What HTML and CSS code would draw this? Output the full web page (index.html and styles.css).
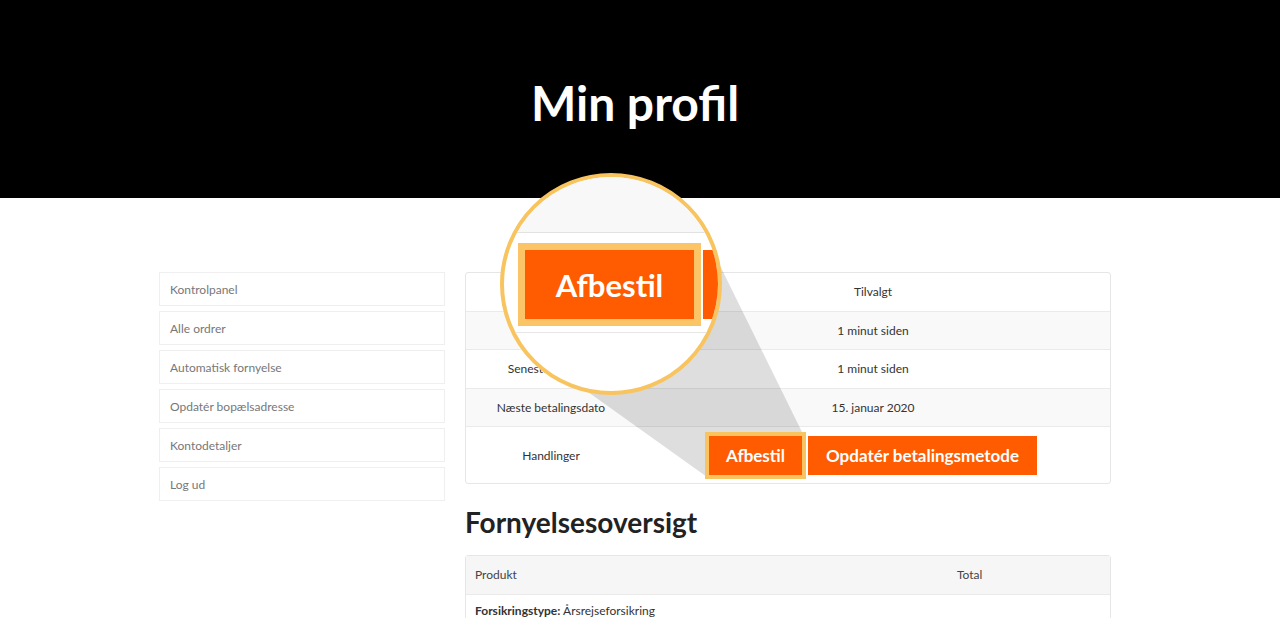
FILE: index.html
```html
<!DOCTYPE html>
<html lang="da">
<head>
    <meta charset="UTF-8">
    <meta name="viewport" content="width=device-width, initial-scale=1.0">
    <title>Min profil</title>
    <link rel="stylesheet" href="styles.css">
</head>
<body>
    <header class="hero">
        <h1>Min profil</h1>
    </header>
    <div class="account">
        <nav class="account-nav">
            <a href="#">Kontrolpanel</a>
            <a href="#">Alle ordrer</a>
            <a href="#">Automatisk fornyelse</a>
            <a href="#">Opdatér bopælsadresse</a>
            <a href="#">Kontodetaljer</a>
            <a href="#">Log ud</a>
        </nav>
        <main class="account-content">
            <table class="details">
                <tr><td>Status</td><td>Tilvalgt</td></tr>
                <tr><td>Startdato</td><td>1 minut siden</td></tr>
                <tr><td>Seneste betaling</td><td>1 minut siden</td></tr>
                <tr><td>Næste betalingsdato</td><td>15. januar 2020</td></tr>
                <tr class="actions">
                    <td>Handlinger</td>
                    <td>
                        <div class="buttons">
                            <button class="btn btn-cancel">Afbestil</button>
                            <button class="btn">Opdatér betalingsmetode</button>
                        </div>
                    </td>
                </tr>
            </table>
            <h2>Fornyelsesoversigt</h2>
            <table class="summary">
                <tr class="head"><td>Produkt</td><td>Total</td></tr>
                <tr><td><strong>Forsikringstype:</strong> Årsrejseforsikring</td><td></td></tr>
            </table>
        </main>

        <!-- magnifier overlay -->
        <svg class="cone" width="952" height="400" viewBox="0 0 952 400">
            <polygon points="541,52 643,259 548,304 401,199" fill="rgba(0,0,0,0.13)"/>
        </svg>
        <div class="lens">
            <div class="lens-band"></div>
            <div class="lens-row">
                <div class="lens-cancel">Afbestil</div>
                <div class="lens-next"></div>
            </div>
            <div class="lens-line"></div>
        </div>
    </div>
</body>
</html>
```

FILE: styles.css
```css
body {
    font-family: 'Lato', 'Open Sans', sans-serif;
    margin: 0;
    padding: 0;
    background: white;
    color: #333;
    overflow: hidden;
}
.hero {
    background: black;
    height: 198px;
    display: flex;
    align-items: center;
    justify-content: center;
}
.hero h1 {
    margin: 0;
    padding: 6px 10px 0 0;
    color: white;
    font-size: 48px;
    font-weight: 700;
}
.account {
    position: relative;
    width: 952px;
    margin: 74px 0 0 159px;
    display: flex;
    gap: 20px;
}
.account-nav {
    width: 286px;
    display: flex;
    flex-direction: column;
    gap: 5px;
}
.account-nav a {
    height: 34px;
    box-sizing: border-box;
    border: 1px solid #efefef;
    padding: 0 10px;
    display: flex;
    align-items: center;
    font-size: 12px;
    color: #777;
    text-decoration: none;
}
.account-content {
    width: 646px;
}
table {
    width: 100%;
    border-collapse: separate;
    border-spacing: 0;
    border: 1px solid #e6e6e6;
    border-radius: 3px;
    font-size: 12px;
}
td {
    padding: 10px 10px 9.5px;
    line-height: 18px;
    border-top: 1px solid #eaeaea;
}
tr:first-child td {
    border-top: none;
}
.details td {
    text-align: center;
}
.details td:first-child {
    width: 150px;
}
.details tr:nth-child(even) td {
    background: #f9f9f9;
}
.details .actions td {
    padding: 9px 10px 8px;
}
.buttons {
    display: flex;
    justify-content: center;
    gap: 6px;
}
.btn {
    position: relative;
    z-index: 2;
    height: 39px;
    padding: 0 18px;
    border: none;
    background: #ff5b00;
    color: white;
    font-family: inherit;
    font-size: 17px;
    font-weight: 700;
}
.btn-cancel {
    padding: 0 17px;
    box-shadow: 0 0 0 4px #f9c45f;
}
h2 {
    margin: 21px 0 16px;
    font-size: 28px;
    font-weight: 700;
    color: #222;
}
.summary td {
    padding: 10px 9px;
}
.summary td:first-child {
    width: 464px;
}
.summary .head td {
    background: #f6f6f6;
    color: #444;
}
.summary tr + tr td {
    padding-top: 7px;
}
.cone {
    position: absolute;
    left: 0;
    top: -99px;
    z-index: 1;
}
.lens {
    position: absolute;
    left: 341px;
    top: -99px;
    z-index: 3;
    width: 222px;
    height: 222px;
    box-sizing: border-box;
    border: 4px solid #f8c45f;
    border-radius: 50%;
    background: white;
    overflow: hidden;
}
.lens-band {
    height: 55px;
    background: #f8f8f8;
    border-bottom: 1px solid #e2e2e2;
}
.lens-row {
    display: flex;
    gap: 2px;
    margin: 10px 0 0 14px;
}
.lens-cancel {
    flex-shrink: 0;
    width: 169px;
    height: 69px;
    border: 7px solid #fbc466;
    background: #ff5b00;
    color: white;
    font-size: 31px;
    font-weight: 700;
    display: flex;
    align-items: center;
    justify-content: center;
}
.lens-next {
    flex-shrink: 0;
    width: 60px;
    height: 69px;
    margin-top: 7px;
    background: #ff5b00;
}
.lens-line {
    margin-top: 6px;
    border-top: 1px solid #e6e6e6;
}
```
